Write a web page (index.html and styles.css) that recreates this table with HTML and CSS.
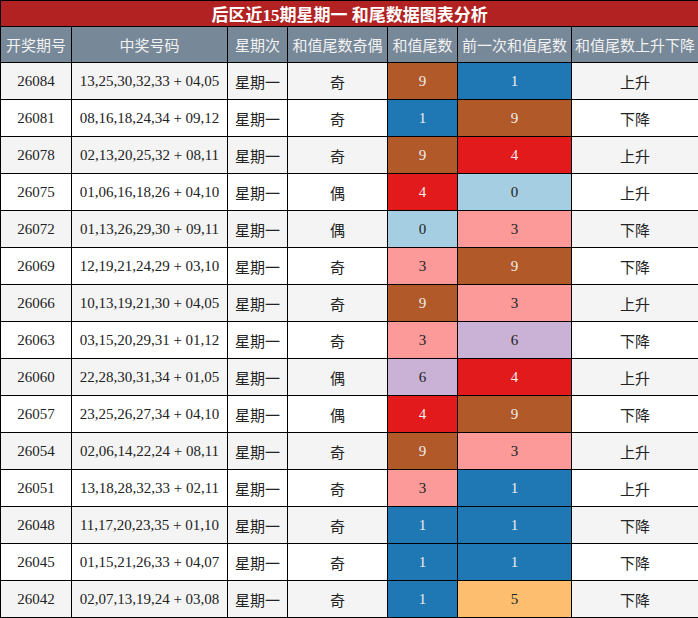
FILE: index.html
```html
<!DOCTYPE html>
<html lang="zh">
<head>
<meta charset="utf-8">
<link rel="stylesheet" href="styles.css">
</head>
<body>
<table class="chart">
<colgroup>
<col class="c1"><col class="c2"><col class="c3"><col class="c4"><col class="c5"><col class="c6"><col class="c7">
</colgroup>
<thead>
<tr><th class="title" colspan="7">后区近15期星期一 和尾数据图表分析</th></tr>
<tr class="head"><th>开奖期号</th><th>中奖号码</th><th>星期次</th><th>和值尾数奇偶</th><th>和值尾数</th><th>前一次和值尾数</th><th>和值尾数上升下降</th></tr>
</thead>
<tbody>
<tr><td>26084</td><td>13,25,30,32,33 + 04,05</td><td>星期一</td><td>奇</td><td class="v9">9</td><td class="v1">1</td><td>上升</td></tr>
<tr><td>26081</td><td>08,16,18,24,34 + 09,12</td><td>星期一</td><td>奇</td><td class="v1">1</td><td class="v9">9</td><td>下降</td></tr>
<tr><td>26078</td><td>02,13,20,25,32 + 08,11</td><td>星期一</td><td>奇</td><td class="v9">9</td><td class="v4">4</td><td>上升</td></tr>
<tr><td>26075</td><td>01,06,16,18,26 + 04,10</td><td>星期一</td><td>偶</td><td class="v4">4</td><td class="v0">0</td><td>上升</td></tr>
<tr><td>26072</td><td>01,13,26,29,30 + 09,11</td><td>星期一</td><td>偶</td><td class="v0">0</td><td class="v3">3</td><td>下降</td></tr>
<tr><td>26069</td><td>12,19,21,24,29 + 03,10</td><td>星期一</td><td>奇</td><td class="v3">3</td><td class="v9">9</td><td>下降</td></tr>
<tr><td>26066</td><td>10,13,19,21,30 + 04,05</td><td>星期一</td><td>奇</td><td class="v9">9</td><td class="v3">3</td><td>上升</td></tr>
<tr><td>26063</td><td>03,15,20,29,31 + 01,12</td><td>星期一</td><td>奇</td><td class="v3">3</td><td class="v6">6</td><td>下降</td></tr>
<tr><td>26060</td><td>22,28,30,31,34 + 01,05</td><td>星期一</td><td>偶</td><td class="v6">6</td><td class="v4">4</td><td>上升</td></tr>
<tr><td>26057</td><td>23,25,26,27,34 + 04,10</td><td>星期一</td><td>偶</td><td class="v4">4</td><td class="v9">9</td><td>下降</td></tr>
<tr><td>26054</td><td>02,06,14,22,24 + 08,11</td><td>星期一</td><td>奇</td><td class="v9">9</td><td class="v3">3</td><td>上升</td></tr>
<tr><td>26051</td><td>13,18,28,32,33 + 02,11</td><td>星期一</td><td>奇</td><td class="v3">3</td><td class="v1">1</td><td>上升</td></tr>
<tr><td>26048</td><td>11,17,20,23,35 + 01,10</td><td>星期一</td><td>奇</td><td class="v1">1</td><td class="v1">1</td><td>下降</td></tr>
<tr><td>26045</td><td>01,15,21,26,33 + 04,07</td><td>星期一</td><td>奇</td><td class="v1">1</td><td class="v1">1</td><td>下降</td></tr>
<tr><td>26042</td><td>02,07,13,19,24 + 03,08</td><td>星期一</td><td>奇</td><td class="v1">1</td><td class="v5">5</td><td>下降</td></tr>
</tbody>
</table>
</body>
</html>
```
FILE: styles.css
```css
html, body {
  margin: 0;
  padding: 0;
  background: #ffffff;
}
.chart {
  border-collapse: collapse;
  table-layout: fixed;
  width: 698px;
  font-family: "Liberation Serif", "Noto Sans CJK SC", serif;
  font-size: 15px;
  color: #222;
}
.c1 { width: 71px; }
.c2 { width: 156px; }
.c3 { width: 60px; }
.c4 { width: 100px; }
.c5 { width: 70px; }
.c6 { width: 114px; }
.c7 { width: 127px; }
.chart th, .chart td {
  border: 1px solid #000;
  padding: 0;
  text-align: center;
  white-space: nowrap;
}
.chart .title {
  background: #b22222;
  color: #fff;
  font-weight: bold;
  font-size: 17px;
  height: 25px;
}
.head th {
  background: #778899;
  color: #f2f2f2;
  font-weight: normal;
  height: 35px;
}
.chart tbody td {
  height: 36px;
}
.chart tbody tr:nth-child(odd) td {
  background: #f4f4f4;
}
.chart tbody tr:nth-child(even) td {
  background: #ffffff;
}
.chart tbody tr td.v9 { background: #b15928; color: #eee; }
.chart tbody tr td.v1 { background: #1f78b4; color: #eee; }
.chart tbody tr td.v4 { background: #e31a1c; color: #eee; }
.chart tbody tr td.v0 { background: #a6cee3; color: #222; }
.chart tbody tr td.v3 { background: #fb9a99; color: #222; }
.chart tbody tr td.v6 { background: #cab2d6; color: #222; }
.chart tbody tr td.v5 { background: #fdbf6f; color: #222; }
```
